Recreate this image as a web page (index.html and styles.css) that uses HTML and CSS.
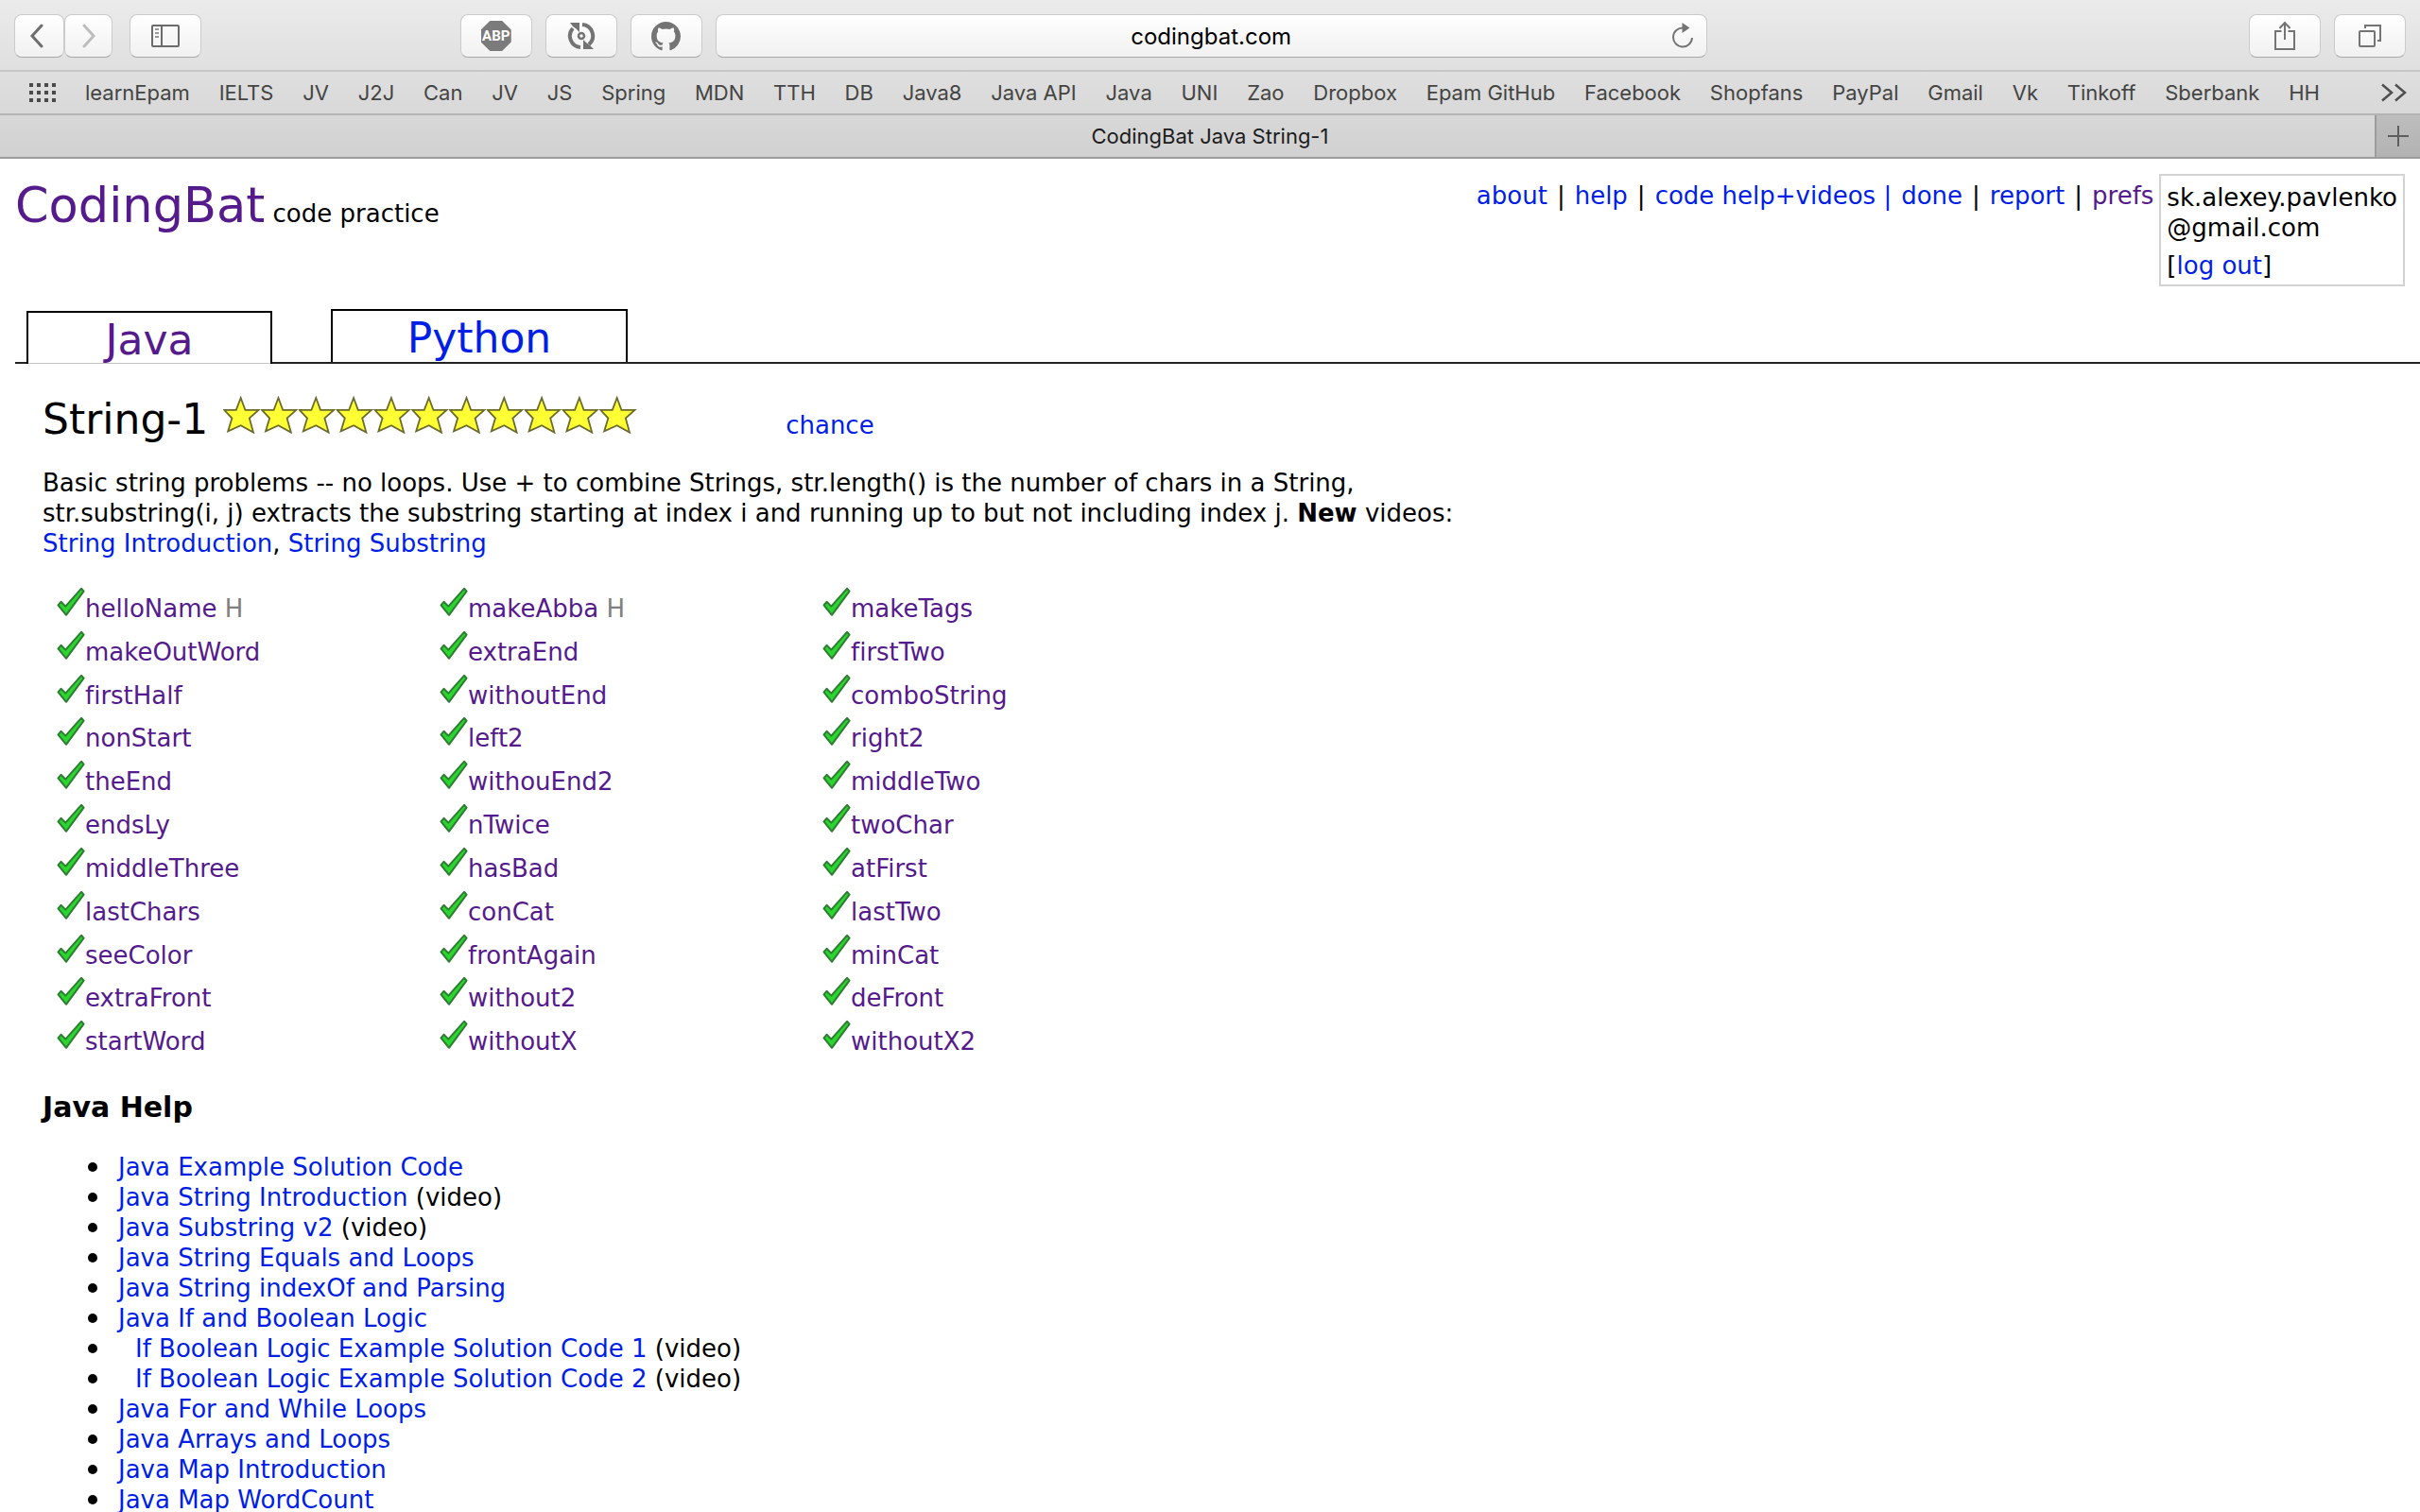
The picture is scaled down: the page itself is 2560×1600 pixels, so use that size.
FILE: index.html
```html
<!DOCTYPE html>
<html lang="en">
<head>
<meta charset="utf-8">
<title>CodingBat Java String-1</title>
<link rel="stylesheet" href="styles.css">
</head>
<body>
<svg class="defs" aria-hidden="true">
  <defs>
    <symbol id="star" viewBox="0 0 40 40">
      <path d="M18.7 2L23.4 14.8H37.5L27.8 23.6L32 38.6L18.7 31.2L5.2 37.4L9.4 23.6L1.2 14.8H13.8Z" fill="#ffff33" stroke="#6b6b2c" stroke-width="1.8"/>
    </symbol>
    <symbol id="check" viewBox="0 0 30 32">
      <path d="M1.5 19.3L4.5 15.8L9.3 20.6L26 1.8L28.6 4.6L10 29.8Z" fill="#2bd52f" stroke="#2f7d33" stroke-width="2" stroke-linejoin="round"/>
    </symbol>
  </defs>
</svg>

<div class="chrome">
  <div class="toolbar">
    <div class="nav-buttons">
      <button class="tool back" aria-label="Back"><svg width="16" height="26" viewBox="0 0 16 26" fill="none" stroke="#6e6e6e" stroke-width="3" stroke-linecap="round"><path d="M13 2L3 13L13 24"/></svg></button>
      <button class="tool forward" aria-label="Forward"><svg width="16" height="26" viewBox="0 0 16 26" fill="none" stroke="#bdbdbd" stroke-width="3" stroke-linecap="round"><path d="M3 2L13 13L3 24"/></svg></button>
    </div>
    <button class="tool" aria-label="Show sidebar"><svg width="30" height="24" viewBox="0 0 30 24" fill="none" stroke="#6b6b6b" stroke-width="2"><rect x="1" y="1" width="28" height="22" rx="1"/><path d="M11 1V23"/><path d="M4 5H8M4 9H8M4 13H8" stroke="#999"/></svg></button>
    <div class="space-left"></div>
    <div class="extensions">
      <button class="tool" aria-label="AdBlock Plus"><span class="abp">ABP</span></button>
      <button class="tool" aria-label="Sync"><svg width="30" height="30" viewBox="0 0 30 30" fill="none" stroke="#747474" stroke-width="4"><path d="M14 27A12 12 0 0 1 6 7"/><path d="M16 3A12 12 0 0 1 23 24"/><circle cx="15" cy="15" r="3" stroke-width="2.5"/><path d="M3 1H13V11L9.500 7.500L6 5Z" fill="#747474" stroke="none"/><path d="M17 19V29H28L24 25L20 22Z" fill="#747474" stroke="none"/></svg></button>
      <button class="tool" aria-label="GitHub"><svg width="31" height="31" viewBox="0 0 16 16" fill="#747474"><path d="M8 0C3.580 0 0 3.580 0 8c0 3.540 2.290 6.530 5.470 7.590.4.070.55-.17.55-.38 0-.19-.01-.82-.01-1.490-2.010.37-2.530-.49-2.690-.94-.09-.23-.48-.94-.82-1.130-.28-.15-.68-.52-.01-.53.63-.01 1.080.58 1.230.82.72 1.210 1.870.87 2.330.66.07-.52.28-.87.51-1.070-1.780-.2-3.640-.89-3.640-3.950 0-.87.31-1.590.82-2.150-.08-.2-.36-1.020.08-2.120 0 0 .67-.21 2.200.82.64-.18 1.320-.27 2-.27s1.360.09 2 .27c1.530-1.040 2.200-.82 2.200-.82.44 1.100.16 1.920.08 2.120.51.56.82 1.270.82 2.150 0 3.070-1.870 3.750-3.650 3.950.29.25.54.73.54 1.480 0 1.070-.01 1.930-.01 2.200 0 .21.15.46.55.38A8.010 8.010 0 0 0 16 8c0-4.420-3.580-8-8-8z"/></svg></button>
    </div>
    <div class="address">
      <input type="text" value="codingbat.com" aria-label="Address">
      <button class="reload" aria-label="Reload"><svg width="24" height="28" viewBox="0 0 24 28" fill="none" stroke="#747474" stroke-width="2"><path d="M12.500 5.500A10 10 0 1 0 22 16"/><path d="M11.500 0L19.500 5.500L11.500 11Z" fill="#747474" stroke="none"/></svg></button>
    </div>
    <div class="space-right"></div>
    <div class="extensions">
      <button class="tool" aria-label="Share"><svg width="22" height="30" viewBox="0 0 22 30" fill="none" stroke="#747474" stroke-width="2"><path d="M7.500 10H1V29H21V10H14.500M11 1V19M5.500 7L11 1L16.500 7"/></svg></button>
      <button class="tool" aria-label="Show all tabs"><svg width="24" height="24" viewBox="0 0 24 24" fill="none" stroke="#747474" stroke-width="2"><rect x="1" y="7" width="16" height="16" rx="1"/><path d="M7 4V1H23V17H20"/></svg></button>
    </div>
  </div>

  <nav class="bookmarks" aria-label="Bookmarks">
    <svg class="grid-icon" width="28" height="20" viewBox="0 0 28 20" stroke="#4a4a4a" stroke-width="4" stroke-dasharray="4 4"><path d="M0 2H28M0 10H28M0 18H28"/></svg>
    <div class="marks">
      <a href="#">learnEpam</a><a href="#">IELTS</a><a href="#">JV</a><a href="#">J2J</a><a href="#">Can</a><a href="#">JV</a><a href="#">JS</a><a href="#">Spring</a><a href="#">MDN</a><a href="#">TTH</a><a href="#">DB</a><a href="#">Java8</a><a href="#">Java API</a><a href="#">Java</a><a href="#">UNI</a><a href="#">Zao</a><a href="#">Dropbox</a><a href="#">Epam GitHub</a><a href="#">Facebook</a><a href="#">Shopfans</a><a href="#">PayPal</a><a href="#">Gmail</a><a href="#">Vk</a><a href="#">Tinkoff</a><a href="#">Sberbank</a><a href="#">HH</a>
    </div>
    <button class="more" aria-label="More bookmarks"><svg width="28" height="20" viewBox="0 0 28 20" fill="none" stroke="#4f4f4f" stroke-width="2.500"><path d="M2 1.500L12 10L2 18.500M16 1.500L26 10L16 18.500"/></svg></button>
  </nav>

  <div class="window-tabs">
    <div class="window-tab">CodingBat Java String-1</div>
    <button class="new-tab" aria-label="New tab"><svg width="22" height="22" viewBox="0 0 22 22" stroke="#5e5e5e" stroke-width="2"><path d="M11 0V22M0 11H22"/></svg></button>
  </div>
</div>

<div class="page">
  <header class="header">
    <div class="brand"><a class="visited logo" href="#">CodingBat</a> code practice</div>
    <nav class="links"><a href="#">about</a><span>|</span><a href="#">help</a><span>|</span><a href="#">code help+videos |</a><a href="#">done</a><span>|</span><a href="#">report</a><span>|</span><a class="visited" href="#">prefs</a></nav>
    <div class="user">
      <div>sk.alexey.pavlenko<br>@gmail.com</div>
      <div class="logout">[<a href="#">log out</a>]</div>
    </div>
  </header>

  <nav class="tabs">
    <a class="tab java visited" href="#">Java</a>
    <a class="tab python" href="#">Python</a>
  </nav>

  <main class="content">
    <div class="title">
      <h1>String-1</h1>
      <svg class="stars" width="438" height="40" role="img" aria-label="11 stars">
        <use href="#star" x="0" width="40" height="40"/><use href="#star" x="39.800" width="40" height="40"/><use href="#star" x="79.600" width="40" height="40"/><use href="#star" x="119.400" width="40" height="40"/><use href="#star" x="159.200" width="40" height="40"/><use href="#star" x="199" width="40" height="40"/><use href="#star" x="238.800" width="40" height="40"/><use href="#star" x="278.600" width="40" height="40"/><use href="#star" x="318.400" width="40" height="40"/><use href="#star" x="358.200" width="40" height="40"/><use href="#star" x="398" width="40" height="40"/>
      </svg>
      <a class="chance" href="#">chance</a>
    </div>
    <p class="intro">Basic string problems -- no loops. Use + to combine Strings, str.length() is the number of chars in a String,<br>str.substring(i, j) extracts the substring starting at index i and running up to but not including index j. <b>New</b> videos:<br><a href="#">String Introduction</a>, <a href="#">String Substring</a></p>

    <table class="problems">
      <tr><td><svg class="check"><use href="#check"/></svg><a href="#">helloName</a> <span class="hint">H</span></td><td><svg class="check"><use href="#check"/></svg><a href="#">makeAbba</a> <span class="hint">H</span></td><td><svg class="check"><use href="#check"/></svg><a href="#">makeTags</a></td></tr>
      <tr><td><svg class="check"><use href="#check"/></svg><a href="#">makeOutWord</a></td><td><svg class="check"><use href="#check"/></svg><a href="#">extraEnd</a></td><td><svg class="check"><use href="#check"/></svg><a href="#">firstTwo</a></td></tr>
      <tr><td><svg class="check"><use href="#check"/></svg><a href="#">firstHalf</a></td><td><svg class="check"><use href="#check"/></svg><a href="#">withoutEnd</a></td><td><svg class="check"><use href="#check"/></svg><a href="#">comboString</a></td></tr>
      <tr><td><svg class="check"><use href="#check"/></svg><a href="#">nonStart</a></td><td><svg class="check"><use href="#check"/></svg><a href="#">left2</a></td><td><svg class="check"><use href="#check"/></svg><a href="#">right2</a></td></tr>
      <tr><td><svg class="check"><use href="#check"/></svg><a href="#">theEnd</a></td><td><svg class="check"><use href="#check"/></svg><a href="#">withouEnd2</a></td><td><svg class="check"><use href="#check"/></svg><a href="#">middleTwo</a></td></tr>
      <tr><td><svg class="check"><use href="#check"/></svg><a href="#">endsLy</a></td><td><svg class="check"><use href="#check"/></svg><a href="#">nTwice</a></td><td><svg class="check"><use href="#check"/></svg><a href="#">twoChar</a></td></tr>
      <tr><td><svg class="check"><use href="#check"/></svg><a href="#">middleThree</a></td><td><svg class="check"><use href="#check"/></svg><a href="#">hasBad</a></td><td><svg class="check"><use href="#check"/></svg><a href="#">atFirst</a></td></tr>
      <tr><td><svg class="check"><use href="#check"/></svg><a href="#">lastChars</a></td><td><svg class="check"><use href="#check"/></svg><a href="#">conCat</a></td><td><svg class="check"><use href="#check"/></svg><a href="#">lastTwo</a></td></tr>
      <tr><td><svg class="check"><use href="#check"/></svg><a href="#">seeColor</a></td><td><svg class="check"><use href="#check"/></svg><a href="#">frontAgain</a></td><td><svg class="check"><use href="#check"/></svg><a href="#">minCat</a></td></tr>
      <tr><td><svg class="check"><use href="#check"/></svg><a href="#">extraFront</a></td><td><svg class="check"><use href="#check"/></svg><a href="#">without2</a></td><td><svg class="check"><use href="#check"/></svg><a href="#">deFront</a></td></tr>
      <tr><td><svg class="check"><use href="#check"/></svg><a href="#">startWord</a></td><td><svg class="check"><use href="#check"/></svg><a href="#">withoutX</a></td><td><svg class="check"><use href="#check"/></svg><a href="#">withoutX2</a></td></tr>
    </table>

    <h2>Java Help</h2>
    <ul class="help">
      <li><a href="#">Java Example Solution Code</a></li>
      <li><a href="#">Java String Introduction</a> (video)</li>
      <li><a href="#">Java Substring v2</a> (video)</li>
      <li><a href="#">Java String Equals and Loops</a></li>
      <li><a href="#">Java String indexOf and Parsing</a></li>
      <li><a href="#">Java If and Boolean Logic</a></li>
      <li><a class="sub" href="#">If Boolean Logic Example Solution Code 1</a> (video)</li>
      <li><a class="sub" href="#">If Boolean Logic Example Solution Code 2</a> (video)</li>
      <li><a href="#">Java For and While Loops</a></li>
      <li><a href="#">Java Arrays and Loops</a></li>
      <li><a href="#">Java Map Introduction</a></li>
      <li><a href="#">Java Map WordCount</a></li>
    </ul>
  </main>
</div>
</body>
</html>
```
FILE: styles.css
```css
* { box-sizing: border-box; }

body {
  margin: 0;
  height: 100vh;
  display: flex;
  flex-direction: column;
  background: #fff;
  color: #000;
  font: 26px/32px Verdana, "DejaVu Sans", sans-serif;
  font-variant-ligatures: none;
}

a { color: #001ee6; text-decoration: none; }
a.visited, .problems a { color: #551a8b; }
button { border: 0; padding: 0; margin: 0; background: none; }
.defs { position: absolute; width: 0; height: 0; }

/* Browser window */
.chrome {
  flex: none;
  background: linear-gradient(#ebebeb, #d1d1d1);
  border-bottom: 2px solid #9c9c9c;
  font: 400 22px/28px Inter, sans-serif;
  color: #444442;
}
.toolbar {
  display: flex;
  align-items: center;
  padding: 15px 15px 13px;
  border-bottom: 2px solid #c6c6c6;
}
.nav-buttons { display: flex; margin-right: 18px; }
.tool {
  display: flex;
  align-items: center;
  justify-content: center;
  width: 76px;
  height: 46px;
}
.tool, .address {
  border: 1px solid #cbcbcb;
  border-bottom-color: #a8a8a8;
  border-radius: 8px;
  background: linear-gradient(#fff, #f1f1f1);
}
.back { width: 53px; padding-right: 6px; }
.forward { width: 51px; }
.space-left { flex: 274; }
.space-right { flex: 574; }
.extensions { display: flex; gap: 14px; }
.abp {
  width: 32px;
  height: 32px;
  background: #7b7b7b;
  color: #fff;
  font: 700 15px/32px Roboto, sans-serif;
  text-align: center;
  clip-path: polygon(30% 0, 70% 0, 100% 30%, 100% 70%, 70% 100%, 30% 100%, 0 70%, 0 30%);
}
.address {
  flex: 1048;
  display: grid;
  grid-template-columns: 50px 1fr 50px;
  align-items: center;
  height: 46px;
  margin-left: 14px;
}
.address input {
  grid-column: 2;
  min-width: 0;
  border: 0;
  padding: 2px 0 0;
  background: none;
  color: #000;
  font: 400 24px/30px Inter, sans-serif;
  text-align: center;
}
.reload { display: flex; justify-content: center; }

.bookmarks {
  display: flex;
  align-items: center;
  height: 46px;
  padding: 0 14px 0 31px;
  border-bottom: 2px solid #b4b4b4;
}
.grid-icon { flex: none; margin-right: 31px; }
.marks { flex: 1; display: flex; justify-content: space-between; white-space: nowrap; }
.marks a { color: inherit; }
.more { display: flex; margin-left: 64px; }

.window-tabs { display: flex; height: 44px; }
.window-tab {
  flex: 1;
  padding-left: 48px;
  line-height: 44px;
  text-align: center;
  color: #1c1c1c;
}
.new-tab {
  display: flex;
  align-items: center;
  justify-content: center;
  width: 48px;
  border-left: 2px solid #9c9c9c;
  background: linear-gradient(#bdbdbd, #b3b3b3);
}

/* Web page */
.page { flex: 1; overflow: auto; scrollbar-width: none; }
.header {
  display: flex;
  align-items: flex-start;
  padding: 16px 16px 0;
}
.brand { flex: 1; padding-top: 2px; line-height: 64px; }
.logo { font-size: 51px; }
.links { display: flex; gap: 10px; padding: 7px 6px 0 0; white-space: nowrap; }
.user {
  border: 2px solid #d3d3d3;
  padding: 7px 6px 4px;
}
.logout { margin-top: 8px; }

.tabs {
  display: flex;
  align-items: flex-end;
  gap: 62px;
  margin: 24px 0 0 16px;
  padding-left: 12px;
  border-bottom: 2px solid #222;
}
.tab {
  padding-top: 3px;
  border: 2px solid #000;
  border-bottom: 0;
  font-size: 44px;
  line-height: 51px;
  text-align: center;
}
.java { width: 260px; margin-bottom: -2px; background: #fff; box-shadow: inset 0 -1px #c4c4c4; }
.python { width: 314px; }

.content { padding: 32px 45px 0; }
.title { display: flex; align-items: baseline; }
h1 { margin: 0 16px 0 0; font-size: 44px; font-weight: 400; line-height: 54px; }
.chance { margin-left: 157px; }
.intro { margin: 24px 0 30px; }

.problems { border-collapse: collapse; table-layout: fixed; width: 1215px; height: 504px; }
.problems td { padding: 0 0 0 15px; vertical-align: top; }
.check { width: 30px; height: 32px; vertical-align: baseline; }
.hint { color: #808080; }

h2 { margin: 29px 0; font-size: 30px; line-height: 36px; }
.help { margin: 0; padding-left: 80px; list-style: none; }
.help li::before {
  content: "";
  display: inline-block;
  width: 10px;
  height: 10px;
  margin: 0 22px 0 -32px;
  border-radius: 50%;
  background: #000;
  vertical-align: 4px;
}
.sub { padding-left: 18px; }
```
